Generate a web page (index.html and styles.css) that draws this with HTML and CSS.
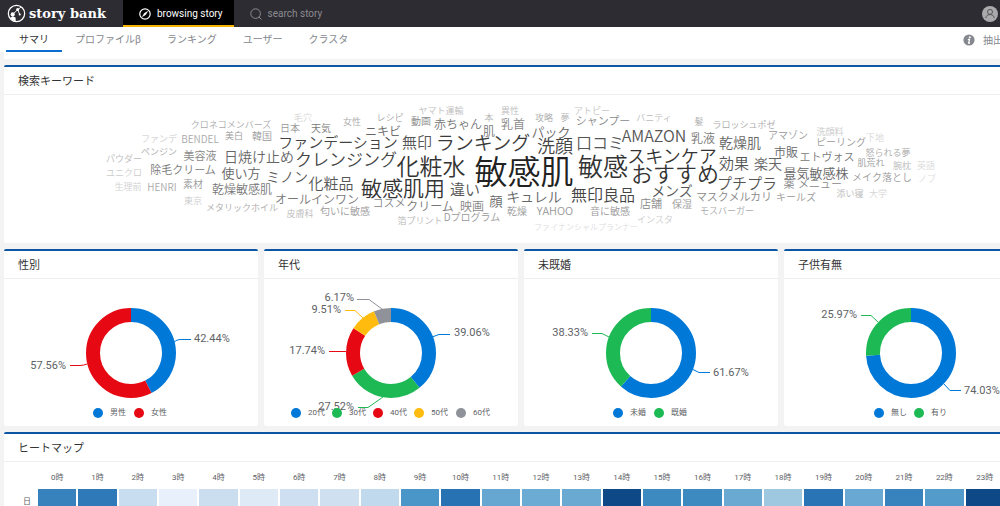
FILE: index.html
```html
<!DOCTYPE html>
<html lang="ja">
<head>
<meta charset="utf-8">
<title>story bank</title>
<link rel="stylesheet" href="styles.css">
</head>
<body>
<div class="page">
  <header class="topbar">
    <a class="brand" href="#">
      <svg class="brand-mark" viewBox="0 0 20 20" aria-hidden="true">
        <circle cx="10" cy="10" r="8.6" fill="none" stroke="#fff" stroke-width="1.3"/>
        <circle cx="6" cy="11" r="2.2" fill="#fff"/>
        <path d="M3.4 14.6 6 13 9 14.2 9.2 18.2 6 17.4Z" fill="#fff"/>
        <path d="M7 10 11.2 6 14.6 3.4M11.2 6 13.4 11" fill="none" stroke="#fff" stroke-width="1"/>
        <circle cx="11.2" cy="5.8" r="1.6" fill="#fff"/>
        <circle cx="13.4" cy="11" r="1.1" fill="#fff"/>
      </svg>
      <span>story bank</span>
    </a>
    <nav class="modes">
      <a class="mode mode-active" href="#">
        <svg class="mode-icon" viewBox="0 0 12 12" aria-hidden="true"><circle cx="6" cy="6" r="5.2" fill="none" stroke="#fff" stroke-width="1.2"/><path d="M8.7 3.3 6.7 6.7 3.3 8.7 5.3 5.3Z" fill="#fff" stroke="#fff" stroke-width=".4"/></svg>
        browsing story
      </a>
      <a class="mode" href="#">
        <svg class="mode-icon" viewBox="0 0 12 12" aria-hidden="true"><circle cx="5.6" cy="5.6" r="4.8" fill="none" stroke="#8b8b90"/><path d="M9 9 11.5 11.5" stroke="#8b8b90"/></svg>
        search story
      </a>
    </nav>
    <button class="avatar" type="button" aria-label="account">
      <svg viewBox="0 0 16 16"><g fill="none" stroke="#55555a" stroke-width="1"><circle cx="8" cy="5.9" r="2.5"/><path d="M3.8 12C4.2 9.6 5.8 8.6 8 8.6S11.8 9.6 12.2 12"/></g></svg>
    </button>
  </header>

  <div class="subbar">
    <nav class="tabs">
      <a class="tab tab-active" href="#">サマリ</a>
      <a class="tab" href="#">プロファイルβ</a>
      <a class="tab" href="#">ランキング</a>
      <a class="tab" href="#">ユーザー</a>
      <a class="tab" href="#">クラスタ</a>
    </nav>
    <div class="extract">
      <svg class="info" viewBox="0 0 12 12" aria-hidden="true"><circle cx="6" cy="6" r="5.6" fill="#85888e"/><circle cx="6.8" cy="3.2" r="1" fill="#fff"/><path d="M4.9 5.3H6.5L5.7 9H7" fill="none" stroke="#fff" stroke-width="1.3"/></svg>
      <span>抽出</span>
    </div>
  </div>

  <main class="content">
    <div class="panel-end"></div>

    <section class="card">
      <h2 class="card-title">検索キーワード</h2>
      <svg class="cloud" id="cloud" viewBox="101 95 840 148" role="img" aria-label="検索キーワード"></svg>
    </section>

    <div class="row">
      <section class="card">
        <h2 class="card-title">性別</h2>
        <svg class="donut" viewBox="0 0 254 148">
          <g class="ring" transform="rotate(-90 127 74)">
            <circle class="s-blue" cx="127" cy="74" r="38" pathLength="100" stroke-dasharray="42.44 57.56"/>
            <circle class="s-red" cx="127" cy="74" r="38" pathLength="100" stroke-dasharray="57.56 42.44" stroke-dashoffset="-42.44"/>
          </g>
          <path class="lead s-blue" d="M170 63 Q173 60.500 176 60.500H187"/>
          <path class="lead s-red" d="M83 85 Q79 86.500 76 86.500H66"/>
          <text x="190" y="63">42.44%</text>
          <text class="end" x="62" y="90">57.56%</text>
          <g class="legend">
            <circle class="f-blue" cx="94" cy="134" r="5"/><text x="106" y="136">男性</text>
            <circle class="f-red" cx="135" cy="134" r="5"/><text x="147" y="136">女性</text>
          </g>
        </svg>
      </section>

      <section class="card">
        <h2 class="card-title">年代</h2>
        <svg class="donut" viewBox="0 0 254 148">
          <g class="ring" transform="rotate(-90 127 74)">
            <circle class="s-blue" cx="127" cy="74" r="38" pathLength="100" stroke-dasharray="39.06 60.94"/>
            <circle class="s-green" cx="127" cy="74" r="38" pathLength="100" stroke-dasharray="27.52 72.48" stroke-dashoffset="-39.06"/>
            <circle class="s-red" cx="127" cy="74" r="38" pathLength="100" stroke-dasharray="17.74 82.26" stroke-dashoffset="-66.58"/>
            <circle class="s-yellow" cx="127" cy="74" r="38" pathLength="100" stroke-dasharray="9.51 90.49" stroke-dashoffset="-84.32"/>
            <circle class="s-grey" cx="127" cy="74" r="38" pathLength="100" stroke-dasharray="6.17 93.83" stroke-dashoffset="-93.83"/>
          </g>
          <path class="lead s-blue" d="M168 58 175 55.500H186"/>
          <path class="lead s-green" d="M119 118 104 128.500H94"/>
          <path class="lead s-red" d="M82 72.500H65"/>
          <path class="lead s-yellow" d="M99 39 91 31.500H81"/>
          <path class="lead s-grey" d="M118 30 105 20.500H93"/>
          <text x="190" y="57">39.06%</text>
          <text class="end" x="90" y="131">27.52%</text>
          <text class="end" x="61" y="75">17.74%</text>
          <text class="end" x="77" y="34">9.51%</text>
          <text class="end" x="90" y="22">6.17%</text>
          <g class="legend">
            <circle class="f-blue" cx="32" cy="134" r="5"/><text x="44" y="136">20代</text>
            <circle class="f-green" cx="73" cy="134" r="5"/><text x="85" y="136">30代</text>
            <circle class="f-red" cx="114" cy="134" r="5"/><text x="126" y="136">40代</text>
            <circle class="f-yellow" cx="155" cy="134" r="5"/><text x="167" y="136">50代</text>
            <circle class="f-grey" cx="197" cy="134" r="5"/><text x="209" y="136">60代</text>
          </g>
        </svg>
      </section>

      <section class="card">
        <h2 class="card-title">未既婚</h2>
        <svg class="donut" viewBox="0 0 254 148">
          <g class="ring" transform="rotate(-90 127 74)">
            <circle class="s-blue" cx="127" cy="74" r="38" pathLength="100" stroke-dasharray="61.67 38.33"/>
            <circle class="s-green" cx="127" cy="74" r="38" pathLength="100" stroke-dasharray="38.33 61.67" stroke-dashoffset="-61.67"/>
          </g>
          <path class="lead s-blue" d="M168 90 175 93.500H186"/>
          <path class="lead s-green" d="M85 58 78 54.500H68"/>
          <text x="189" y="97">61.67%</text>
          <text class="end" x="64" y="57">38.33%</text>
          <g class="legend">
            <circle class="f-blue" cx="94" cy="134" r="5"/><text x="106" y="136">未婚</text>
            <circle class="f-green" cx="135" cy="134" r="5"/><text x="147" y="136">既婚</text>
          </g>
        </svg>
      </section>

      <section class="card">
        <h2 class="card-title">子供有無</h2>
        <svg class="donut" viewBox="0 0 254 148">
          <g class="ring" transform="rotate(-90 127 74)">
            <circle class="s-blue" cx="127" cy="74" r="38" pathLength="100" stroke-dasharray="74.03 25.97"/>
            <circle class="s-green" cx="127" cy="74" r="38" pathLength="100" stroke-dasharray="25.97 74.03" stroke-dashoffset="-74.03"/>
          </g>
          <path class="lead s-blue" d="M160 105 166 111.500H177"/>
          <path class="lead s-green" d="M94 43 87 36.500H77"/>
          <text x="180" y="115">74.03%</text>
          <text class="end" x="73" y="39">25.97%</text>
          <g class="legend">
            <circle class="f-blue" cx="95" cy="134" r="5"/><text x="107" y="136">無し</text>
            <circle class="f-green" cx="135" cy="134" r="5"/><text x="147" y="136">有り</text>
          </g>
        </svg>
      </section>
    </div>

    <section class="card">
      <h2 class="card-title">ヒートマップ</h2>
      <div class="heat-wrap">
        <table class="heat">
          <thead><tr id="hours"><td class="day"></td></tr></thead>
          <tbody><tr id="sunday"><th class="day" scope="row">日</th></tr></tbody>
        </table>
      </div>
    </section>
  </main>
</div>
<script src="charts.js"></script>
</body>
</html>
```
FILE: styles.css
```css
* { box-sizing: border-box; }

body {
  margin: 0;
  overflow: hidden;
  background: #f3f3f3;
  color: #333;
  font-family: Roboto, "Noto Sans CJK JP", sans-serif;
  font-size: 10px;
}

a { color: inherit; text-decoration: none; }
svg { display: block; }

.page { min-width: 1042px; }

.topbar {
  display: flex;
  height: 27px;
  padding-right: 44px;
  background: #2d2c32;
  color: #fff;
}

.brand {
  display: flex;
  align-items: center;
  gap: 3px;
  width: 123px;
  padding-left: 7px;
  font: bold 13px "DejaVu Serif", serif;
  white-space: nowrap;
}

.brand-mark { width: 19px; height: 19px; flex: none; }

.modes { display: flex; }

.mode {
  display: flex;
  align-items: center;
  gap: 6px;
  padding: 2px 11px 0 16px;
  border-bottom: 2px solid transparent;
  color: #8b8b90;
}

.mode-active { background: #000; border-color: #f5b400; color: #fff; }
.mode-icon { width: 12px; height: 12px; }

.avatar {
  align-self: center;
  width: 16px;
  height: 16px;
  margin-left: auto;
  padding: 0;
  border: 0;
  border-radius: 50%;
  background: #aaaaac;
}

.subbar {
  display: flex;
  justify-content: space-between;
  height: 25px;
  padding: 0 39px 0 6px;
  background: #fff;
  color: #85888e;
}

.tabs { display: flex; }

.tab {
  padding: 2px 13px 0;
  border-bottom: 2px solid transparent;
  line-height: 21px;
}

.tab-active { border-color: #0a6ed1; color: #333; }

.extract { display: flex; align-items: center; gap: 8px; }
.info { width: 12px; height: 12px; }

.content {
  display: flex;
  flex-direction: column;
  gap: 6px;
  padding: 0 4px;
}

.panel-end { height: 7px; background: #fff; }

.card {
  border-top: 2px solid #0c56a4;
  border-radius: 2px;
  background: #fff;
}

.card-title {
  margin: 0;
  padding: 2px 14px 0;
  border-bottom: 1px solid #eee;
  font-size: 11px;
  font-weight: 400;
  line-height: 25px;
}

.cloud {
  width: 840px;
  height: 148px;
  margin: 0 auto;
  font-family: "Noto Sans CJK JP", sans-serif;
  font-weight: 350;
  text-anchor: middle;
}

.row {
  display: grid;
  grid-template-columns: repeat(4, 1fr);
  gap: 6px;
}

.donut {
  width: 254px;
  height: 148px;
  margin: 0 auto -1px;
  font-size: 11px;
  fill: #606266;
}

.donut .end { text-anchor: end; }
.ring circle { fill: none; stroke-width: 14; }
.lead { fill: none; stroke-width: 1; }
.legend { font-size: 8px; }

.s-blue { stroke: #0078d7; }
.s-red { stroke: #e60813; }
.s-green { stroke: #1db954; }
.s-yellow { stroke: #ffbb0e; }
.s-grey { stroke: #8f9299; }
.f-blue { fill: #0078d7; }
.f-red { fill: #e60813; }
.f-green { fill: #1db954; }
.f-yellow { fill: #ffbb0e; }
.f-grey { fill: #8f9299; }

.heat-wrap { padding: 8px 32px 8px 12px; }

.heat {
  width: 100%;
  table-layout: fixed;
  border-spacing: 2px 0;
  color: #606266;
  font-size: 8px;
  text-align: center;
}

.heat th, .heat td { padding: 0; font-weight: 400; }
.heat thead tr { height: 19px; line-height: 16px; vertical-align: top; }
.heat tbody tr { height: 22px; }
.heat .day { width: 18px; }
```
FILE: charts.js
```js
// text, centre x, centre y, font size, grey level
const words = [
  ["毛穴", 303, 118, 9, "#d5d5d5"], ["クロネコメンバーズ", 231, 125, 9, "#aaa"],
  ["日本", 290, 128, 10, "#999"], ["天気", 321, 128, 10, "#777"],
  ["女性", 352, 122, 9, "#aaa"], ["ニキビ", 383, 132, 12, "#666"],
  ["レシピ", 390, 118, 9, "#aaa"], ["ヤマト運輸", 441, 111, 9, "#c0c0c0"],
  ["ファンデ", 159, 139, 9, "#ccc"], ["BENDEL", 200, 139, 10, "#aaa"],
  ["美白", 234, 136, 9, "#999"], ["韓国", 262, 136, 10, "#999"],
  ["ファンデーション", 338, 143, 15, "#444"], ["無印", 417, 143, 15, "#555"],
  ["ランキング", 483, 143, 19, "#3a3a3a"], ["肌", 489, 132, 12, "#777"],
  ["本", 489, 118, 9, "#b5b5b5"], ["異性", 510, 111, 9, "#c0c0c0"],
  ["動画", 421, 121, 10, "#888"], ["赤ちゃん", 458, 125, 12, "#777"],
  ["乳首", 513, 125, 12, "#888"], ["攻略", 544, 118, 9, "#aaa"],
  ["夢", 565, 118, 9, "#b8b8b8"], ["アトピー", 592, 111, 9, "#c5c5c5"],
  ["シャンプー", 603, 121, 11, "#888"], ["パック", 551, 132, 13, "#666"],
  ["洗顔", 555, 147, 18, "#444"], ["口コミ", 600, 143, 16, "#555"],
  ["バニティ", 654, 118, 9, "#bbb"], ["髪", 699, 122, 9, "#aaa"],
  ["ラロッシュポゼ", 744, 125, 9, "#aaa"], ["AMAZON", 654, 136, 16, "#555"],
  ["乳液", 703, 139, 12, "#777"], ["乾燥肌", 740, 143, 14, "#666"],
  ["スキンケア", 672, 157, 18, "#333"], ["効果", 734, 164, 15, "#555"],
  ["楽天", 768, 164, 14, "#666"], ["市販", 786, 153, 12, "#666"],
  ["アマゾン", 788, 135, 10, "#999"], ["洗顔料", 830, 132, 9, "#c8c8c8"],
  ["ピーリング", 841, 142, 10, "#999"], ["下地", 875, 138, 9, "#d8d8d8"],
  ["怒られる夢", 888, 153, 9, "#aaa"], ["エトヴォス", 827, 157, 11, "#777"],
  ["肌荒れ", 871, 163, 9, "#999"], ["腕枕", 902, 166, 9, "#bbb"],
  ["英語", 926, 166, 9, "#d8d8d8"], ["景気敏感株", 816, 173, 13, "#666"],
  ["メイク落とし", 882, 177, 10, "#999"], ["ノブ", 927, 179, 9, "#ddd"],
  ["プチプラ", 747, 184, 15, "#555"], ["薬", 789, 184, 11, "#888"],
  ["メニュー", 820, 184, 11, "#888"], ["添い寝", 850, 194, 9, "#bbb"],
  ["大学", 878, 194, 9, "#d5d5d5"], ["キールズ", 796, 197, 10, "#999"],
  ["マスクメルカリ", 734, 197, 11, "#888"], ["メンズ", 672, 191, 14, "#555"],
  ["店舗", 651, 204, 11, "#888"], ["保湿", 682, 204, 10, "#999"],
  ["モスバーガー", 727, 211, 9, "#aaa"], ["インスタ", 655, 220, 9, "#ccc"],
  ["ファイナンシャルプランナー", 586, 227, 8, "#ddd"], ["音に敏感", 610, 211, 10, "#999"],
  ["YAHOO", 555, 211, 11, "#999"], ["乾燥", 517, 211, 10, "#999"],
  ["無印良品", 603, 195, 16, "#444"], ["キュレル", 534, 197, 14, "#666"],
  ["顔", 496, 201, 13, "#666"], ["Dプログラム", 472, 217, 10, "#999"],
  ["映画", 472, 207, 12, "#888"], ["クリーム", 430, 207, 12, "#777"],
  ["コスメ", 389, 203, 11, "#888"], ["箔プリント", 420, 221, 9, "#b8b8b8"],
  ["違い", 465, 190, 15, "#555"], ["敏感肌用", 403, 188, 21, "#333"],
  ["化粧水", 431, 167, 23, "#333"], ["敏感肌", 524, 172, 33, "#222"],
  ["敏感", 603, 167, 25, "#333"], ["おすすめ", 675, 174, 22, "#333"],
  ["クレンジング", 346, 160, 17, "#444"], ["化粧品", 331, 184, 15, "#555"],
  ["ミノン", 287, 177, 14, "#555"], ["使い方", 241, 173, 13, "#666"],
  ["日焼け止め", 259, 157, 14, "#666"], ["美容液", 200, 156, 11, "#888"],
  ["ペンジン", 159, 152, 9, "#aaa"], ["パウダー", 124, 159, 9, "#bbb"],
  ["除毛クリーム", 183, 170, 11, "#777"], ["ユニクロ", 124, 173, 9, "#ccc"],
  ["生理前", 128, 187, 9, "#d0d0d0"], ["HENRI", 162, 187, 10, "#aaa"],
  ["素材", 193, 184, 10, "#999"], ["乾燥敏感肌", 242, 190, 12, "#777"],
  ["東京", 193, 201, 9, "#ccc"], ["メタリックホイル", 242, 208, 9, "#aaa"],
  ["オールインワン", 317, 200, 12, "#777"], ["皮膚科", 300, 214, 9, "#bbb"],
  ["匂いに敏感", 345, 211, 10, "#999"]
];

const cloud = document.getElementById("cloud");
for (const [text, x, y, size, color] of words) {
  const node = document.createElementNS("http://www.w3.org/2000/svg", "text");
  node.setAttribute("x", x);
  node.setAttribute("y", y);
  node.setAttribute("dy", "0.36em");
  node.setAttribute("font-size", size);
  node.setAttribute("fill", color);
  node.textContent = text;
  cloud.appendChild(node);
}

const sunday = [
  "#3781bd", "#2f79b8", "#c9ddf0", "#e8f1fb", "#cbdeef", "#deebf7",
  "#cddff0", "#cfe0f1", "#c1d9ed", "#4a96c9", "#2672b2", "#65a7d1",
  "#6cabd3", "#6aaad2", "#0e4887", "#3d8ac1", "#3d8ac1", "#6aaad2",
  "#9ec8e0", "#2874b4", "#68a8d2", "#3883bd", "#529bcb", "#0e4887"
];

sunday.forEach((color, hour) => {
  const head = document.createElement("th");
  head.scope = "col";
  head.textContent = hour + "時";
  document.getElementById("hours").appendChild(head);
  const cell = document.createElement("td");
  cell.style.backgroundColor = color;
  document.getElementById("sunday").appendChild(cell);
});
```
